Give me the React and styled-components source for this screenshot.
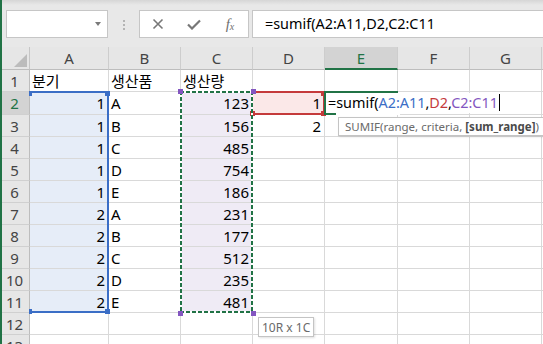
import styled, { createGlobalStyle, css } from "styled-components";

const GlobalStyle = createGlobalStyle`
  html, body {
    margin: 0;
    padding: 0;
    background: #fff;
    overflow: hidden;
  }
  body {
    font-family: "Noto Sans", "Noto Sans CJK KR", sans-serif;
  }
`;

const GREEN = "#217346";
const BLUE = "#3b6ec6";
const PURPLE = "#8356c0";
const RED = "#c53a3b";
const GRID = "#d9d9d9";

const BAR_H = 47;
const colW = [30, 79, 72, 72, 72, 73, 72, 72];
const rowH = [23, 22, 23, 22, 22, 22, 22, 22, 22, 22, 22, 22, 22, 22];
const letters = ["A", "B", "C", "D", "E", "F", "G"];

// left / top edge of a column / row in page pixels (index 0 = headers)
const colX = (c) => colW.slice(0, c).reduce((a, b) => a + b, 0);
const rowY = (r) => BAR_H + rowH.slice(0, r).reduce((a, b) => a + b, 0);

// frame over a block of cells, centred on the gridlines
const box = (c1, r1, c2, r2) => ({
  left: colX(c1) - 1,
  top: rowY(r1) - 1,
  width: colX(c2 + 1) - colX(c1) + 1,
  height: rowY(r2 + 1) - rowY(r1) + 1,
});

const rows = [
  ["분기", "생산품", "생산량"],
  [1, "A", 123, 1, "edit"],
  [1, "B", 156, 2],
  [1, "C", 485],
  [1, "D", 754],
  [1, "E", 186],
  [2, "A", 231],
  [2, "B", 177],
  [2, "C", 512],
  [2, "D", 235],
  [2, "E", 481],
  [],
  [],
];

const Window = styled.div`
  position: relative;
  width: 543px;
  height: 344px;
  overflow: hidden;
  background: #fff;

  &::before {
    content: "";
    position: absolute;
    left: 0;
    top: 0;
    bottom: 0;
    width: 2px;
    background: ${GREEN};
    z-index: 20;
  }
`;

const FormulaBar = styled.div`
  height: ${BAR_H}px;
  box-sizing: border-box;
  display: flex;
  align-items: flex-start;
  padding: 10px 0 0 6px;
  background: linear-gradient(#d6d6d6, #e8e8e8 5px);
`;

const NameBox = styled.div`
  width: 102px;
  height: 28px;
  box-sizing: border-box;
  background: #fff;
  border: 1px solid #c6c6c6;
  display: flex;
  align-items: center;
  justify-content: flex-end;
  padding-right: 6px;

  &::after {
    content: "";
    border-left: 3.5px solid transparent;
    border-right: 3.5px solid transparent;
    border-top: 4px solid #7a7a7a;
  }
`;

const Grip = styled.div`
  display: flex;
  flex-direction: column;
  gap: 2px;
  margin: 10px 0 0 15px;

  span {
    width: 2px;
    height: 2px;
    background: #b4b4b4;
  }
`;

const ButtonBox = styled.div`
  margin-left: 14px;
  width: 110px;
  height: 28px;
  box-sizing: border-box;
  background: #fff;
  border: 1px solid #c6c6c6;
  display: grid;
  grid-template-columns: repeat(3, 36px);
  align-items: center;
  justify-items: center;
`;

const Fx = styled.span`
  font-family: "Liberation Serif", serif;
  font-style: italic;
  font-size: 15px;
  color: #6f6f6f;
  line-height: 1;

  sub {
    font-size: 10px;
    vertical-align: baseline;
    position: relative;
    top: 1px;
  }
`;

const FormulaInput = styled.div`
  margin-left: 3px;
  flex: 1;
  height: 28px;
  box-sizing: border-box;
  background: #fff;
  border: 1px solid #c6c6c6;
  border-right: none;
  padding-left: 12px;
  font-size: 14.4px;
  line-height: 26px;
  color: #000;
  white-space: nowrap;
`;

const Sheet = styled.div`
  display: grid;
  grid-template-columns: ${colW.map((w) => `${w}px`).join(" ")} 1fr;
  grid-template-rows: ${rowH.map((h) => `${h}px`).join(" ")};
  font-size: 15px;
`;

const Corner = styled.div`
  position: relative;
  background: #e6e6e6;
  border-right: 1px solid #c6c6c6;
  border-bottom: 1px solid #bdbdbd;

  &::after {
    content: "";
    position: absolute;
    right: 2px;
    bottom: 2px;
    border-left: 13px solid transparent;
    border-bottom: 13px solid #bcbcbc;
  }
`;

const ColHead = styled.div`
  display: flex;
  align-items: center;
  justify-content: center;
  background: ${(p) => (p.$active ? "#d3d3d3" : "#e6e6e6")};
  color: ${(p) => (p.$active ? GREEN : "#444")};
  border-right: 1px solid #cdcdcd;
  border-bottom: ${(p) => (p.$active ? `2px solid ${GREEN}` : "1px solid #bdbdbd")};
`;

const RowHead = styled.div`
  display: flex;
  align-items: center;
  justify-content: center;
  background: ${(p) => (p.$active ? "#d3d3d3" : "#e6e6e6")};
  color: ${(p) => (p.$active ? GREEN : "#444")};
  border-right: 1px solid #bdbdbd;
  border-bottom: 1px solid #d0d0d0;
`;

const Cell = styled.div`
  display: flex;
  align-items: center;
  justify-content: ${(p) => (p.$num ? "flex-end" : "flex-start")};
  padding: 0 3px 0 2px;
  background: ${(p) => p.$fill || "#fff"};
  border-right: 1px solid ${GRID};
  border-bottom: 1px solid ${GRID};
  color: #000;
  white-space: nowrap;
  overflow: ${(p) => (p.$spill ? "visible" : "hidden")};
`;

const EditText = styled.span`
  position: relative;
  z-index: 3;
  margin-left: 1px;
  padding-right: 2px;
  background: #fff;
  color: #000;
  font-size: 14.4px;
  line-height: 20px;

  .a { color: ${BLUE}; }
  .d { color: ${RED}; }
  .c { color: ${PURPLE}; }
  .caret {
    display: inline-block;
    width: 1px;
    height: 17px;
    margin-left: 1px;
    background: #000;
    vertical-align: -3px;
  }
`;

const dashes = (color, deg) =>
  `repeating-linear-gradient(${deg}, ${color} 0 4px, #fff 4px 6px)`;

// highlight drawn over a range of cells
const Frame = styled.div`
  position: absolute;
  z-index: 5;
  box-sizing: border-box;
  pointer-events: none;
  ${(p) =>
    p.$dashed
      ? css`
          background:
            ${dashes(p.$color, "90deg")} top / 100% 2px no-repeat,
            ${dashes(p.$color, "90deg")} bottom / 100% 2px no-repeat,
            ${dashes(p.$color, "180deg")} left / 2px 100% no-repeat,
            ${dashes(p.$color, "180deg")} right / 2px 100% no-repeat;
        `
      : css`
          border: 2px solid ${p.$color};
        `}
  ${(p) => p.$open && css`border-${p.$open}: none;`}
  ${(p) => p.$cut && css`border-bottom-color: transparent;`}
`;

const corners = {
  tl: "top: -2px; left: -2px;",
  tr: "top: -2px; right: -3px;",
  bl: "bottom: -3px; left: -2px;",
  br: "bottom: -3px; right: -3px;",
};

const Handle = styled.span`
  position: absolute;
  width: ${(p) => (p.$small ? 3 : 5)}px;
  height: 5px;
  background: ${(p) => p.$color};
  ${(p) => corners[p.$at]}
  ${(p) => p.$small && "left: 0;"}
`;

const EditCut = styled.span`
  position: absolute;
  left: 10px;
  right: -2px;
  bottom: -2px;
  height: 2px;
  background: #fff;
`;

const Tip = styled.div`
  position: absolute;
  z-index: 8;
  box-sizing: border-box;
  height: ${(p) => p.$h}px;
  background: #fff;
  border: 1px solid #c4c4c4;
  box-shadow: 1px 1px 2px rgba(0, 0, 0, 0.12);
  color: #6a6a6a;
  font-size: ${(p) => p.$size}px;
  white-space: nowrap;
  display: flex;
  align-items: center;
  padding: 0 ${(p) => p.$pad}px;

  b {
    color: #4a4a4a;
    font-weight: 700;
  }
`;

const fills = (r, c) => {
  if (r >= 2 && r <= 11 && c === 1) return "#e6edf8";
  if (r >= 2 && r <= 11 && c === 3) return "#efebf5";
  if (r === 2 && c === 4) return "#fbe8e8";
  return null;
};

const XIcon = () => (
  <svg width="12" height="12" viewBox="0 0 12 12">
    <path d="M1.5 1.5 L10.5 10.5 M10.5 1.5 L1.5 10.5" stroke="#777" strokeWidth="1.6" fill="none" />
  </svg>
);

const CheckIcon = () => (
  <svg width="14" height="11" viewBox="0 0 14 11">
    <path d="M1 5.5 L5 9.5 L13 1.5" stroke="#777" strokeWidth="2.2" fill="none" />
  </svg>
);

const Handles = ({ color, only, smallLeft }) =>
  (only || ["tl", "tr", "bl", "br"]).map((at) => (
    <Handle
      key={at}
      $at={at}
      $color={color}
      $small={smallLeft && at[1] === "l"}
    />
  ));

const Overlays = () => {
  const sumTip = box(5, 3, 5, 3);
  const sizeTip = box(3, 12, 3, 12);
  return (
    <>
      <Frame $color={BLUE} $open="left" style={box(1, 2, 1, 11)}>
        <Handles color={BLUE} smallLeft />
      </Frame>
      <Frame $color={RED} $open="left" style={box(4, 2, 4, 2)}>
        <Handles color={RED} only={["tr", "bl", "br"]} />
      </Frame>
      <Frame $color={GREEN} $dashed style={box(3, 2, 3, 11)}>
        <Handles color={PURPLE} />
      </Frame>
      <Frame $color={GREEN} $open="right" style={box(5, 2, 5, 2)}>
        <EditCut />
      </Frame>

      <Tip $h={19} $size={11.5} $pad={6} style={{ left: sumTip.left + 14, top: sumTip.top + 3 }}>
        SUMIF(range, criteria,&nbsp;<b>[sum_range]</b>)
      </Tip>
      <Tip $h={20} $size={12} $pad={3} style={{ left: sizeTip.left + sizeTip.width + 5, top: sizeTip.top + 5 }}>
        10R x 1C
      </Tip>
    </>
  );
};

export default function App() {
  return (
    <Window>
      <GlobalStyle />
      <FormulaBar>
        <NameBox />
        <Grip>
          <span />
          <span />
          <span />
        </Grip>
        <ButtonBox>
          <XIcon />
          <CheckIcon />
          <Fx>
            f<sub>x</sub>
          </Fx>
        </ButtonBox>
        <FormulaInput>=sumif(A2:A11,D2,C2:C11</FormulaInput>
      </FormulaBar>

      <Sheet>
        <Corner />
        {letters.map((l) => (
          <ColHead key={l} $active={l === "E"}>
            {l}
          </ColHead>
        ))}
        <ColHead />
        {rows.map((row, i) => {
          const r = i + 1;
          return [
            <RowHead key={`h${r}`} $active={r === 2}>
              {r}
            </RowHead>,
            ...letters.map((_, j) => {
              const c = j + 1;
              const v = row[j];
              if (v === "edit") {
                return (
                  <Cell key={`${r}-${c}`} $spill>
                    <EditText>
                      =sumif(<span className="a">A2:A11</span>,<span className="d">D2</span>,
                      <span className="c">C2:C11</span>
                      <span className="caret" />
                    </EditText>
                  </Cell>
                );
              }
              return (
                <Cell key={`${r}-${c}`} $num={typeof v === "number"} $fill={fills(r, c)}>
                  {v}
                </Cell>
              );
            }),
            <Cell key={`${r}-x`} />,
          ];
        })}
      </Sheet>
      <Overlays />
    </Window>
  );
}
